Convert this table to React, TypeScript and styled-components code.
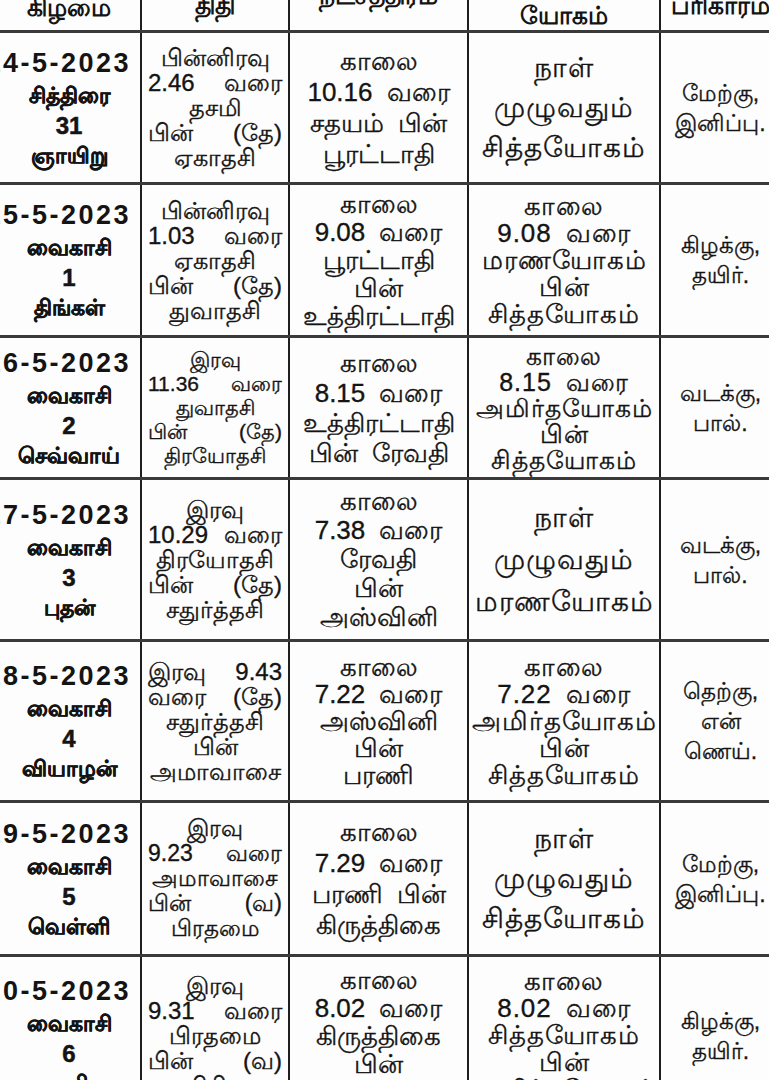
import React from 'react'
import styled, { createGlobalStyle } from 'styled-components'

const GlobalStyle = createGlobalStyle`
  html, body {
    margin: 0;
    padding: 0;
    background: #ffffff;
    overflow: hidden;
  }
  body {
    font-family: "Liberation Sans", "Noto Sans", sans-serif;
    color: #141414;
  }
`

const COLS = '144px 148px 179px 192px 119px'

const Page = styled.div`
  width: 769px;
  height: 1080px;
  overflow: hidden;
  background: #fdfdfd;
`

const Table = styled.div`
  margin-left: -2px;
  margin-top: -23px;
  width: 782px;
  display: flex;
  flex-direction: column;
`

const Row = styled.div<{ h: number }>`
  display: grid;
  grid-template-columns: ${COLS};
  height: ${(p) => p.h}px;
  border-bottom: 3px solid #3a3a3a;
  box-sizing: border-box;
`

const Cell = styled.div<{ pad?: number }>`
  border-right: 2px solid #1e1e1e;
  display: flex;
  flex-direction: column;
  justify-content: center;
  align-items: stretch;
  padding: 0 ${(p) => p.pad ?? 5}px;
  min-width: 0;
  &:last-child {
    border-right: none;
  }
`

const HeadCell = styled(Cell)<{ lift: number }>`
  justify-content: flex-end;
  padding-bottom: ${(p) => p.lift}px;
`

const HeadText = styled.div`
  font-weight: 700;
  font-size: 25px;
  line-height: 30px;
  text-align: center;
  white-space: nowrap;
`

const DateLine = styled.div`
  font-weight: 700;
  font-size: 27px;
  letter-spacing: 2.5px;
  line-height: 36px;
  display: flex;
  justify-content: flex-end;
  padding-right: 9px;
  white-space: nowrap;
`

const DayLine = styled.div<{ num?: boolean }>`
  font-weight: 700;
  font-size: ${(p) => (p.num ? 24 : 22)}px;
  line-height: 30px;
  text-align: center;
  white-space: nowrap;
  -webkit-text-stroke: 0.5px currentColor;
`

const Line = styled.div<{ size: number; lh: number; spread?: boolean; track?: number }>`
  font-size: ${(p) => p.size}px;
  line-height: ${(p) => p.lh}px;
  letter-spacing: ${(p) => p.track ?? 0}px;
  white-space: nowrap;
  display: flex;
  justify-content: ${(p) => (p.spread ? 'space-between' : 'center')};
  gap: 14px;
  -webkit-text-stroke: 0.35px currentColor;
`

type Block = { lines: string[]; size: number; lh: number; spread?: boolean; track?: number }

type Day = {
  h: number
  day: string[]
  thithi: Block
  star: Block
  yogam: Block
  remedy: string[]
}

const thithi = (lines: string[], size = 24, lh = 25): Block => ({ lines, size, lh, spread: true })
const star = (lines: string[], lh = 29): Block => ({ lines, size: 26, lh })
const yogam = (lines: string[], size = 26, lh = 27): Block => ({ lines, size, lh, track: 1 })

const days: Day[] = [
  {
    h: 152,
    day: ['14-5-2023', 'சித்திரை', '31', 'ஞாயிறு'],
    thithi: thithi(['பின்னிரவு', '2.46 வரை', 'தசமி', 'பின் (தே)', 'ஏகாதசி']),
    star: star(['காலை', '10.16 வரை', 'சதயம் பின்', 'பூரட்டாதி'], 31),
    yogam: yogam(['நாள்', 'முழுவதும்', 'சித்தயோகம்'], 28, 40),
    remedy: ['மேற்கு,', 'இனிப்பு.'],
  },
  {
    h: 153,
    day: ['15-5-2023', 'வைகாசி', '1', 'திங்கள்'],
    thithi: thithi(['பின்னிரவு', '1.03 வரை', 'ஏகாதசி', 'பின் (தே)', 'துவாதசி']),
    star: star(['காலை', '9.08 வரை', 'பூரட்டாதி', 'பின்', 'உத்திரட்டாதி'], 28),
    yogam: yogam(['காலை', '9.08 வரை', 'மரணயோகம்', 'பின்', 'சித்தயோகம்']),
    remedy: ['கிழக்கு,', 'தயிர்.'],
  },
  {
    h: 142,
    day: ['16-5-2023', 'வைகாசி', '2', 'செவ்வாய்'],
    thithi: thithi(['இரவு', '11.36 வரை', 'துவாதசி', 'பின் (தே)', 'திரயோதசி'], 21, 24),
    star: star(['காலை', '8.15 வரை', 'உத்திரட்டாதி', 'பின் ரேவதி'], 30),
    yogam: yogam(['காலை', '8.15 வரை', 'அமிர்தயோகம்', 'பின்', 'சித்தயோகம்'], 25, 26),
    remedy: ['வடக்கு,', 'பால்.'],
  },
  {
    h: 162,
    day: ['17-5-2023', 'வைகாசி', '3', 'புதன்'],
    thithi: thithi(['இரவு', '10.29 வரை', 'திரயோதசி', 'பின் (தே)', 'சதுர்த்தசி']),
    star: star(['காலை', '7.38 வரை', 'ரேவதி', 'பின்', 'அஸ்வினி'], 29),
    yogam: yogam(['நாள்', 'முழுவதும்', 'மரணயோகம்'], 28, 42),
    remedy: ['வடக்கு,', 'பால்.'],
  },
  {
    h: 161,
    day: ['18-5-2023', 'வைகாசி', '4', 'வியாழன்'],
    thithi: thithi(['இரவு 9.43', 'வரை (தே)', 'சதுர்த்தசி', 'பின்', 'அமாவாசை']),
    star: star(['காலை', '7.22 வரை', 'அஸ்வினி', 'பின்', 'பரணி'], 27),
    yogam: yogam(['காலை', '7.22 வரை', 'அமிர்தயோகம்', 'பின்', 'சித்தயோகம்']),
    remedy: ['தெற்கு,', 'என்', 'ணெய்.'],
  },
  {
    h: 154,
    day: ['19-5-2023', 'வைகாசி', '5', 'வெள்ளி'],
    thithi: thithi(['இரவு', '9.23 வரை', 'அமாவாசை', 'பின் (வ)', 'பிரதமை'], 23, 25),
    star: star(['காலை', '7.29 வரை', 'பரணி பின்', 'கிருத்திகை'], 31),
    yogam: yogam(['நாள்', 'முழுவதும்', 'சித்தயோகம்'], 28, 40),
    remedy: ['மேற்கு,', 'இனிப்பு.'],
  },
  {
    h: 160,
    day: ['20-5-2023', 'வைகாசி', '6', 'சனி'],
    thithi: thithi(['இரவு', '9.31 வரை', 'பிரதமை', 'பின் (வ)', 'துவிதியை']),
    star: star(['காலை', '8.02 வரை', 'கிருத்திகை', 'பின்', 'ரோகிணி'], 28),
    yogam: yogam(['காலை', '8.02 வரை', 'சித்தயோகம்', 'பின்', 'அமிர்தயோகம்']),
    remedy: ['கிழக்கு,', 'தயிர்.'],
  },
]

const headers = [
  { title: 'கிழமை', lift: 8 },
  { title: 'திதி', lift: 10 },
  { title: 'நட்சத்திரம்', lift: 20 },
  { title: 'யோகம்', lift: 0 },
  { title: 'பரிகாரம்', lift: 10 },
]

const TextBlock = ({ block }: { block: Block }) => (
  <>
    {block.lines.map((l, i) => {
      const words = l.split(' ')
      const spread = block.spread && words.length > 1
      return (
        <Line key={i} size={block.size} lh={block.lh} spread={spread} track={block.track}>
          {words.map((w, j) => (
            <span key={j}>{w}</span>
          ))}
        </Line>
      )
    })}
  </>
)

const App = () => {
  return (
    <Page>
      <GlobalStyle />
      <Table>
        <Row h={56}>
          {headers.map((h) => (
            <HeadCell key={h.title} lift={h.lift} pad={0}>
              <HeadText>{h.title}</HeadText>
            </HeadCell>
          ))}
        </Row>
        {days.map((d) => (
          <Row h={d.h} key={d.day[0]}>
            <Cell pad={0}>
              <DateLine>{d.day[0]}</DateLine>
              {d.day.slice(1).map((t, i) => (
                <DayLine key={i} num={i === 1}>{t}</DayLine>
              ))}
            </Cell>
            <Cell pad={6}>
              <TextBlock block={d.thithi} />
            </Cell>
            <Cell pad={3}>
              <TextBlock block={d.star} />
            </Cell>
            <Cell pad={3}>
              <TextBlock block={d.yogam} />
            </Cell>
            <Cell pad={0}>
              <TextBlock block={{ lines: d.remedy, size: 23, lh: 30 }} />
            </Cell>
          </Row>
        ))}
      </Table>
    </Page>
  )
}

export default App
